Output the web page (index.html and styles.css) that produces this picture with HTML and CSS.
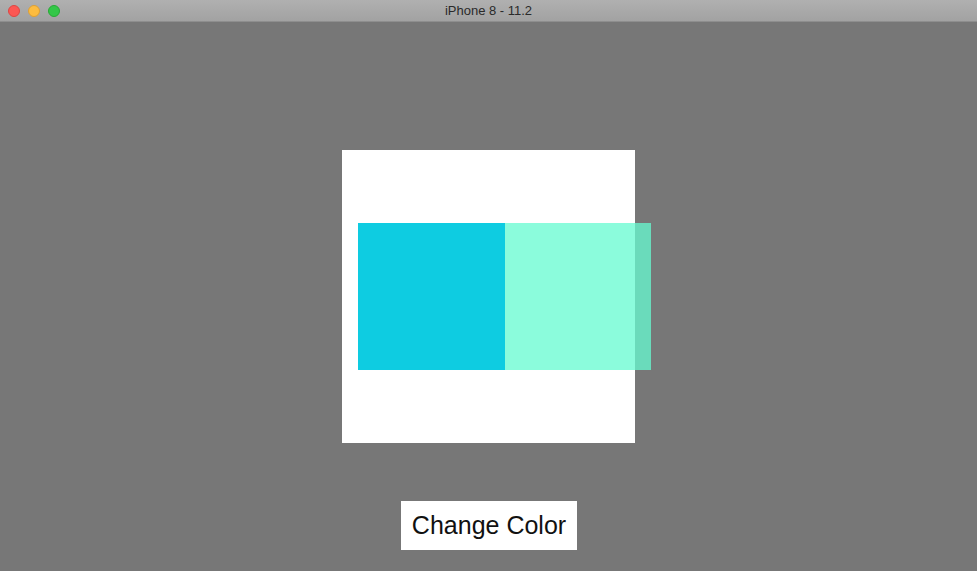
FILE: index.html
```html
<!DOCTYPE html>
<html>
<head>
<meta charset="utf-8">
<link rel="stylesheet" href="styles.css">
</head>
<body>
<div class="window">
  <div class="titlebar">
    <div class="lights">
      <span class="light red"></span>
      <span class="light yellow"></span>
      <span class="light green"></span>
    </div>
    <div class="title">iPhone 8 - 11.2</div>
  </div>
  <div class="screen">
    <div class="canvas">
      <div class="box cyan"></div>
      <div class="box mint"></div>
    </div>
    <div class="button">Change Color</div>
  </div>
</div>
</body>
</html>
```

FILE: styles.css
```css
html, body {
  margin: 0;
  padding: 0;
  height: 100%;
  background: #777777;
  font-family: "Liberation Sans", Arial, sans-serif;
}
.window {
  width: 977px;
  height: 571px;
  display: flex;
  flex-direction: column;
  overflow: hidden;
}
.titlebar {
  height: 22px;
  flex-shrink: 0;
  position: relative;
  background: linear-gradient(#b0b0b0, #a2a2a2);
  border-bottom: 1px solid #8e8e8e;
  box-sizing: border-box;
  display: flex;
  align-items: center;
  justify-content: center;
}
.lights {
  position: absolute;
  left: 8px;
  top: 5px;
  display: flex;
  gap: 8px;
}
.light {
  width: 12px;
  height: 12px;
  border-radius: 50%;
  box-sizing: border-box;
}
.red { background: #fc5753; border: 1px solid #de4642; }
.yellow { background: #fdbc40; border: 1px solid #dea034; }
.green { background: #33c748; border: 1px solid #27aa35; }
.title {
  font-size: 13px;
  color: #2a2a2a;
  font-family: "Liberation Sans", Arial, sans-serif;
}
.screen {
  flex: 1;
  background: #777777;
  display: flex;
  flex-direction: column;
  align-items: center;
  padding-top: 128px;
}
.canvas {
  width: 293px;
  height: 293px;
  background: #ffffff;
  display: flex;
  padding: 73px 0 0 16px;
  box-sizing: border-box;
  align-items: flex-start;
}
.box {
  height: 147px;
  flex-shrink: 0;
}
.cyan {
  width: 147px;
  background: #0ecce1;
}
.mint {
  width: 146px;
  background: rgba(102, 251, 209, 0.76);
}
.button {
  margin-top: 58px;
  width: 176px;
  height: 49px;
  background: #ffffff;
  display: flex;
  align-items: center;
  justify-content: center;
  font-size: 25px;
  color: #111111;
  padding-left: 1px;
  box-sizing: border-box;
}
```
